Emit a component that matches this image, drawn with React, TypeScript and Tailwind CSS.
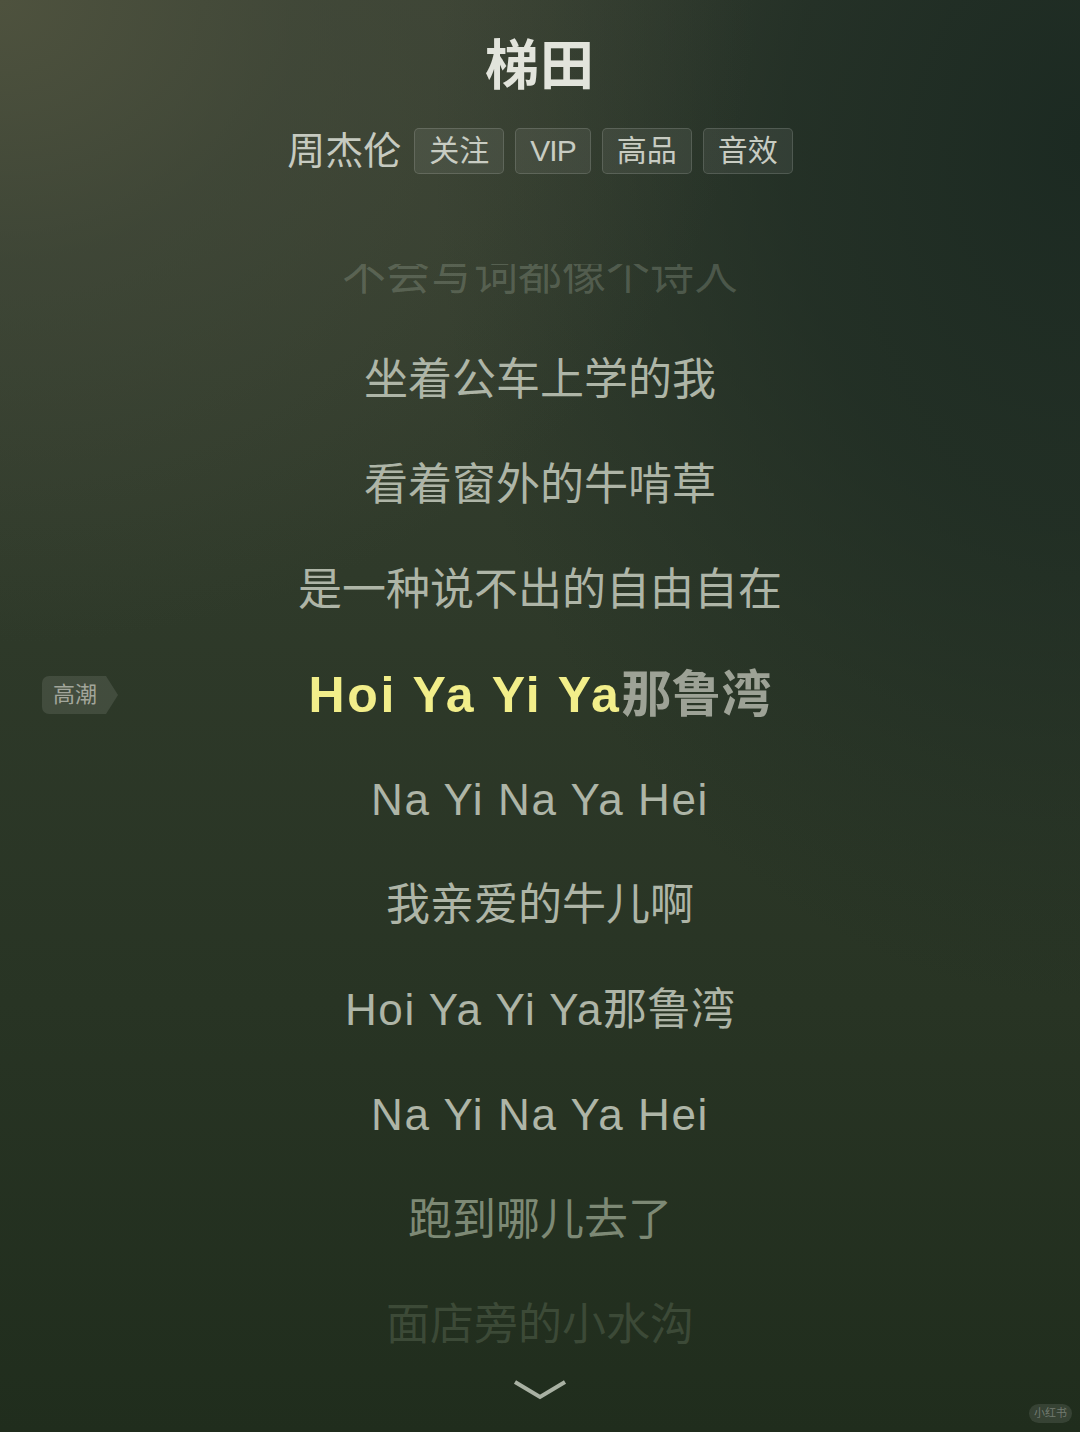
import React from "react";

const FONT = {
  fontFamily: '"Liberation Sans", "Noto Sans CJK SC", sans-serif',
};

function Tag({ children }: { children: React.ReactNode }) {
  return (
    <div className="h-[46px] px-[14px] flex items-center rounded-[5px] border border-[rgba(255,255,255,0.14)] bg-[rgba(255,255,255,0.07)] text-[30px] leading-none text-[#c8ccc2]">
      {children}
    </div>
  );
}

function Line({ children, cls }: { children: React.ReactNode; cls: string }) {
  return (
    <div className={"h-[105px] flex items-center justify-center text-[44px] leading-none whitespace-nowrap " + cls}>
      {children}
    </div>
  );
}

function Lat({ children }: { children: React.ReactNode }) {
  return <span className="tracking-[1.6px]">{children}</span>;
}

export default function App() {
  return (
    <div
      style={FONT}
      className="relative w-[1080px] h-[1432px] overflow-hidden flex flex-col items-center bg-[#27331f] bg-[radial-gradient(ellipse_70%_45%_at_0%_0%,#4e523e_0%,rgba(70,76,60,0.55)_40%,rgba(45,56,40,0)_100%),radial-gradient(ellipse_60%_60%_at_100%_10%,#1c2a22_0%,rgba(28,42,34,0.7)_45%,rgba(28,42,34,0)_100%),linear-gradient(180deg,#3a4233_0%,#2f3a2a_40%,#283424_70%,#202d1d_100%)]"
    >
      {/* Title */}
      <div className="pt-[39px] text-[54px] leading-none font-bold text-[#e2e4dc] tracking-[1px]">
        梯田
      </div>

      {/* Artist row */}
      <div className="mt-[35px] flex items-center gap-[11px]">
        <div className="text-[38px] leading-none text-[#c6cac0] mr-[2px]">周杰伦</div>
        <Tag>关注</Tag>
        <Tag><span className="tracking-[-1px]">VIP</span></Tag>
        <Tag>高品</Tag>
        <Tag>音效</Tag>
      </div>

      {/* Lyrics */}
      <div className="mt-[90px] w-full overflow-hidden flex flex-col">
        <div className="-mt-[42px]">
          <Line cls="text-[rgba(170,182,165,0.28)]">不会写词都像个诗人</Line>
        </div>
        <Line cls="text-[#aeb5a7]">坐着公车上学的我</Line>
        <Line cls="text-[#aeb5a7]">看着窗外的牛啃草</Line>
        <Line cls="text-[#aeb5a7]">是一种说不出的自由自在</Line>
        <div className="relative h-[105px] flex items-center justify-center">
          <div className="absolute left-[42px] top-[34px] flex items-center">
            <div className="h-[38px] pl-[11px] pr-[9px] flex items-center rounded-l-[7px] bg-[rgba(255,255,255,0.1)] text-[22px] leading-none text-[#a2a69b]">
              高潮
            </div>
            <div className="w-0 h-0 border-y-[19px] border-y-transparent border-l-[12px] border-l-[rgba(255,255,255,0.1)]" />
          </div>
          <div className="text-[50px] leading-none font-bold whitespace-nowrap">
            <span className="text-[#f2ee8a] tracking-[2.6px]">Hoi Ya Yi Ya</span>
            <span className="text-[#9da296]">那鲁湾</span>
          </div>
        </div>
        <Line cls="text-[#aeb5a7]"><Lat>Na Yi Na Ya Hei</Lat></Line>
        <Line cls="text-[#aeb5a7]">我亲爱的牛儿啊</Line>
        <Line cls="text-[#aeb5a7]"><Lat>Hoi Ya Yi Ya</Lat>那鲁湾</Line>
        <Line cls="text-[#aeb5a7]"><Lat>Na Yi Na Ya Hei</Lat></Line>
        <Line cls="text-[#7d8975]">跑到哪儿去了</Line>
        <Line cls="text-[rgba(140,155,130,0.25)]">面店旁的小水沟</Line>
      </div>

      {/* Chevron */}
      <svg
        className="mt-[2px]"
        width="56"
        height="24"
        viewBox="0 0 56 24"
        fill="none"
      >
        <path d="M3 3 L28 18 L53 3" stroke="#a9b1a3" strokeWidth="4" strokeLinecap="butt" strokeLinejoin="miter" />
      </svg>

      {/* Watermark */}
      <div className="absolute right-[8px] bottom-[9px] h-[19px] px-[5px] flex items-center rounded-full bg-[rgba(255,255,255,0.1)] text-[11px] leading-none text-[rgba(255,255,255,0.3)]">
        小红书
      </div>
    </div>
  );
}
